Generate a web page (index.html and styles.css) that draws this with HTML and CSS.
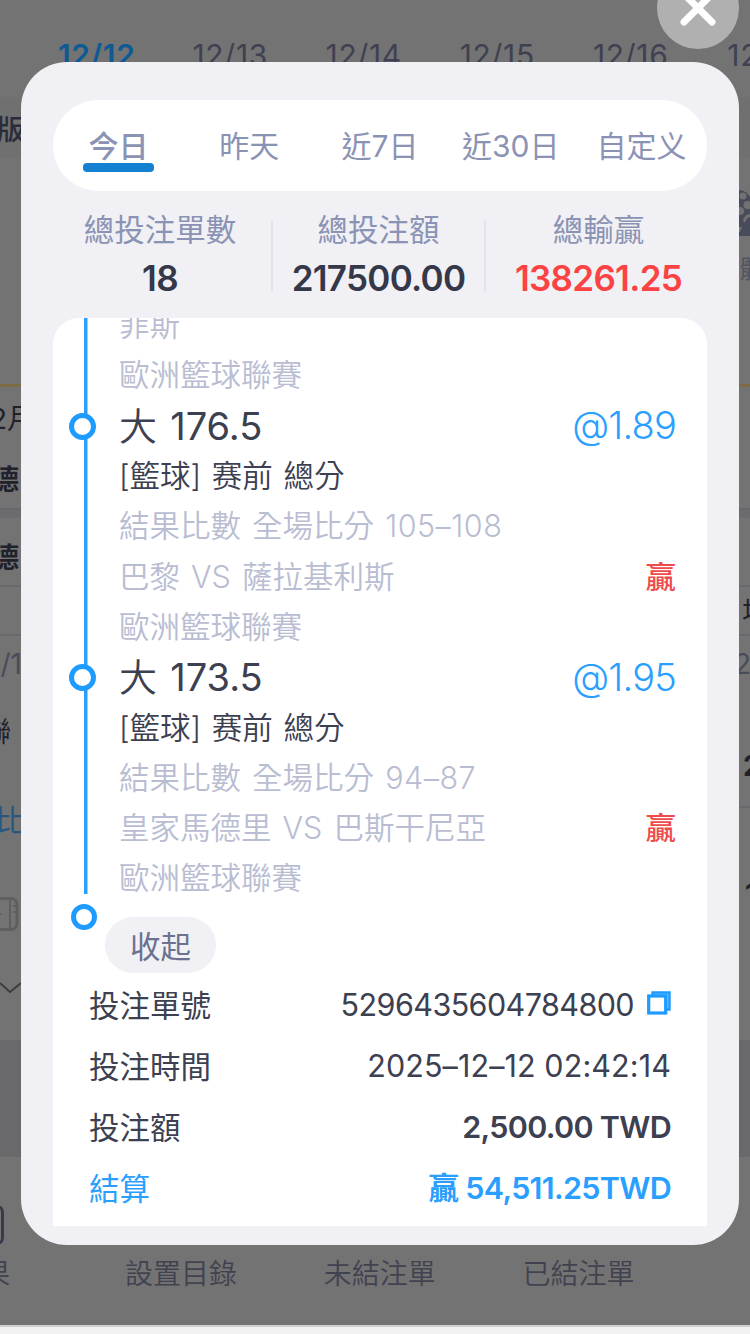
FILE: index.html
```
<!DOCTYPE html>
<html lang="zh-Hant">
<head>
<meta charset="utf-8">
<title>注單</title>
<link rel="stylesheet" href="styles.css">
</head>
<body>
<div class="page">
  <div class="backdrop">
    <div class="dates">
      <span class="date active">12/12</span><span class="date">12/13</span><span class="date">12/14</span><span class="date">12/15</span><span class="date">12/16</span><span class="date">12/17</span>
    </div>
    <div class="behind">
      <div class="rail left">
        <div class="cell h61 band"><b class="league">版</b></div>
        <div class="cell h226"></div>
        <div class="cell h63 month"><span>2月</span></div>
        <div class="cell h61"><b>德</b></div>
        <div class="gap"></div>
        <div class="cell h69 lined"><b>德</b></div>
        <div class="cell h49 lined"></div>
        <div class="cell h56 dim"><span>/1</span></div>
        <div class="cell h76"><em>聯</em></div>
        <div class="cell h100 link"><span>比</span></div>
        <div class="cell h94"><svg class="video" width="22" height="34" viewBox="0 0 22 34"><rect x="-20" y="1.5" width="38" height="31" rx="6" fill="none" stroke="#5f5f60" stroke-width="3"/><path d="M11 2v30M14 9h4M14 15h4" fill="none" stroke="#5f5f60" stroke-width="2"/><path d="M-3 13l6 4-6 4z" fill="#5f5f60"/></svg></div>
        <div class="cell h78 more"><svg class="chevron" width="21" height="12" viewBox="0 0 21 12"><path d="M0 1l10 9 11-9" fill="none" stroke="#3c3c3e" stroke-width="1.8"/></svg></div>
        <div class="shade"></div>
      </div>
      <div class="rail right">
        <div class="cell h61 band"></div>
        <div class="cell h226 team">
          <svg width="11" height="46" viewBox="0 0 11 46"><path d="M0 0Q8 1 11 7V46H0z" fill="#484b5a"/><g fill="#727272"><circle cx="4" cy="6" r="3.500"/><circle cx="8.500" cy="15" r="4"/><circle cx="1" cy="21" r="4"/><path d="M4 30Q6 24 11 24V27Q7 28 6 33z"/><path d="M0 37h3l-2 5H0z"/></g></svg>
          <span>體育</span>
        </div>
        <div class="cell h63 month"></div>
        <div class="cell h61"></div>
        <div class="gap"></div>
        <div class="cell h69 lined"></div>
        <div class="cell h49 lined"><span class="field">場</span></div>
        <div class="cell h56 dim"><span>24</span></div>
        <div class="cell h116 lined"><b class="total">2</b></div>
        <div class="cell h232"><b class="one">1</b></div>
        <div class="shade"></div>
      </div>
    </div>
    <div class="bottom-nav">
      <span class="nav">賽果</span><span class="nav">設置目錄</span><span class="nav">未結注單</span><span class="nav">已結注單</span>
      <i class="nav-icon"></i>
    </div>
  </div>
  <div class="base"></div>

  <button class="close" aria-label="關閉"><svg width="82" height="82" viewBox="0 0 82 82"><path d="M27 27L55 55M55 27L27 55" fill="none" stroke="#fff" stroke-width="7" stroke-linecap="round"/></svg></button>

  <section class="modal">
    <nav class="tabs">
      <span class="tab on">今日</span><span class="tab">昨天</span><span class="tab">近7日</span><span class="tab">近30日</span><span class="tab">自定义</span>
    </nav>
    <div class="stats">
      <div class="stat"><span>總投注單數</span><b>18</b></div>
      <div class="stat"><span>總投注額</span><b>217500.00</b></div>
      <div class="stat"><span>總輸贏</span><b class="red">138261.25</b></div>
    </div>
    <div class="sheet">
      <div class="legs">
        <div class="line"><span>菲斯</span></div>
        <div class="line"><span>歐洲籃球聯賽</span></div>
        <div class="line pick"><span>大 <span class="total-line">176.5</span></span><span class="odds">@1.89</span></div>
        <div class="line market"><span>[籃球] 赛前 總分</span></div>
        <div class="line"><span>結果比數 全場比分 <span class="score">105–108</span></span></div>
        <div class="line"><span>巴黎 VS 薩拉基利斯</span><b class="win">贏</b></div>
        <div class="line"><span>歐洲籃球聯賽</span></div>
        <div class="line pick"><span>大 <span class="total-line">173.5</span></span><span class="odds">@1.95</span></div>
        <div class="line market"><span>[籃球] 赛前 總分</span></div>
        <div class="line"><span>結果比數 全場比分 <span class="score">94–87</span></span></div>
        <div class="line"><span>皇家馬德里 VS 巴斯干尼亞</span><b class="win">贏</b></div>
        <div class="line"><span>歐洲籃球聯賽</span></div>
      </div>
      <div class="fold"><i class="dot"></i><button class="collapse">收起</button></div>
      <div class="info">
        <div class="row"><span class="key">投注單號</span><span class="val"><span class="id">5296435604784800</span><svg class="copy" width="24" height="24" viewBox="0 0 24 24"><path d="M5.500 1.500h17v17h-4V5h-13z" fill="#7dc5ff" stroke="#1d9bff" stroke-width="2.400"/><rect x="1.700" y="5" width="17" height="17" fill="#fff" stroke="#1d9bff" stroke-width="3.200"/></svg></span></div>
        <div class="row"><span class="key">投注時間</span><span class="val time">2025–12–12 02:42:14</span></div>
        <div class="row"><span class="key">投注額</span><span class="val strong">2,500.00 TWD</span></div>
        <div class="row blue"><span class="key">結算</span><span class="strong payout">贏 54,511.25TWD</span></div>
      </div>
    </div>
  </section>
</div>
</body>
</html>
```
FILE: styles.css
```
*, *::before, *::after { box-sizing: border-box; }
body {
  margin: 0;
  font-family: Inter, "Noto Sans CJK TC", sans-serif;
  font-size: 30.5px;
  font-weight: 400;
  color: #3c4050;
}
.page { position: relative; width: 750px; height: 1334px; overflow: hidden; background: #f2f2f2; }
button { border: 0; padding: 0; font: inherit; color: inherit; }
i, em { font-style: normal; }

/* Dimmed page behind the dialog */
.backdrop { height: 1325px; background: #737373; color: #3f4152; display: flex; flex-direction: column; overflow: hidden; }
.dates { height: 97px; flex: none; display: flex; padding: 36px 0 0 30px; }
.date { flex: none; width: 133.500px; text-align: center; font-size: 30px; letter-spacing: 0.7px; line-height: 39px; white-space: nowrap; }
.date.active { color: #0e5a94; font-weight: 600; }
.behind { height: 1060px; flex: none; display: flex; justify-content: space-between; }
.rail { display: flex; flex-direction: column; overflow: hidden; }
.left { width: 21px; }
.right { width: 11px; }
.cell { flex: none; display: flex; align-items: center; justify-content: flex-end; font-size: 28px; white-space: nowrap; color: #20212a; }
.right .cell { justify-content: flex-start; }
.band { background: #707070; }
.h61 { height: 61px; }
.h226 { height: 226px; }
.h63 { height: 63px; }
.h69 { height: 69px; padding-top: 9px; }
.h49 { height: 49px; }
.h56 { height: 56px; }
.h76 { height: 76px; }
.h100 { height: 100px; }
.h94 { height: 94px; }
.h78 { height: 78px; }
.h116 { height: 116px; }
.h232 { height: 232px; }
.cell .league { font-weight: 500; color: #2b2c3b; }
.month { border-top: 3px solid #7d6b45; }
.month span { margin-right: -14px; }
.cell b { font-weight: 700; }
.left .h61 b, .left .h69 b { margin-right: 2px; }
.left .h61 .league { margin-right: -4px; }
.gap { flex: none; height: 10px; background: #6c6c6f; border-top: 2px solid #67686c; }
.lined { border-bottom: 2px solid #68696d; }
.cell.dim { color: #4a4b5a; }
.left .dim span { margin-right: -1px; }
.cell em { margin-right: 10px; }
.cell.link { color: #28587e; font-size: 30px; }
.link span { margin-right: -4px; }
.video, .chevron { flex: none; }
.video { margin-bottom: 3px; }
.more { padding-bottom: 26px; }
.shade { flex: 1; background: #69696c; }
.team { flex-direction: column; padding-top: 32px; font-size: 25px; }
.right .team { align-items: flex-start; color: #505260; }
.team span { line-height: 66px; margin-left: 1px; }
.team svg { flex: none; }
.field { margin-left: 3px; }
.right .dim span { margin-left: -5px; }
.total { margin: 34px 0 0 4px; }
.one { margin: -60px 0 0 6px; }
.bottom-nav { position: relative; flex: 1; display: flex; margin-left: -117px; padding-top: 97px; }
.nav { flex: none; width: 198.700px; text-align: center; font-size: 28px; line-height: 40px; color: #41424f; font-weight: 350; }
.nav-icon { position: absolute; left: 89px; top: 48px; width: 32px; height: 40px; border: 3px solid #383a4a; border-radius: 7px; }
.base { height: 9px; border-top: 2px solid #d0d0d0; background: #f2f2f2; }

.close { position: absolute; left: 657px; top: -33px; width: 82px; height: 82px; border-radius: 50%; background: #b0b0b0; }
.close svg { display: block; }

/* Dialog */
.modal {
  position: absolute; left: 21px; top: 62px; width: 718px; height: 1183px;
  padding: 38px 32px 19px; border-radius: 46px; background: #f0f0f5;
  display: flex; flex-direction: column;
}
.tabs { height: 91px; flex: none; display: flex; border-radius: 46px; background: #fff; color: #8b93b4; font-size: 30px; }
.tab { flex: 1; text-align: center; line-height: 92px; white-space: nowrap; }
.on { display: flex; flex-direction: column; align-items: center; font-weight: 500; }
.on::after { content: ""; width: 71px; height: 9px; margin-top: -29px; flex: none; border-radius: 4px; background: #1380d2; }
.stats { height: 127px; flex: none; margin: 0 -4px; display: grid; grid-template-columns: 224px 213px 225px; padding-top: 29px; }
.stat { height: 72px; display: flex; flex-direction: column; align-items: center; color: #8b93b4; border-right: 2px solid #e2e4ed; }
.stat:last-child { border-right: 0; }
.stat span { height: 34px; flex: none; line-height: 20px; }
.stat b { font-size: 35px; line-height: 48px; font-weight: 600; letter-spacing: -0.7px; color: #343848; }
.stat b.red { color: #fb4343; }
.sheet { flex: 1; overflow: hidden; border-radius: 26px 26px 0 0; background: #fff; }
.legs {
  margin-top: -18px; padding: 0 31px 0 66px; height: 594px;
  background: linear-gradient(#2a9fff, #2a9fff) 31px 0 / 3.500px 594px no-repeat;
}
.line { height: 50.300px; display: flex; align-items: center; justify-content: space-between; white-space: nowrap; word-spacing: 2.5px; color: #b9bdd2; position: relative; font-weight: 350; }
.line > span { padding-bottom: 4px; }
.score { letter-spacing: 0.5px; }
.pick { font-size: 38px; color: #3c4050; }
.line.pick > span { padding-bottom: 5px; }
.total-line { font-weight: 400; }
.pick::before, .dot { content: ""; width: 27px; height: 27px; border: 5px solid #1d9bff; border-radius: 50%; background: #fff; }
.pick::before { position: absolute; left: -50px; top: 12px; }
.line.pick > .odds { color: #2a9fff; padding-bottom: 1px; letter-spacing: -0.8px; }
.market { color: #3c4050; word-spacing: 2px; }
.win { color: #ee4b4b; font-weight: 500; padding-bottom: 4px; }
.fold { display: flex; align-items: flex-start; gap: 8px; padding: 10px 0 0 18px; height: 80px; }
.dot { width: 26px; height: 26px; }
.collapse { width: 111px; height: 56px; margin-top: 13px; padding-bottom: 1px; border-radius: 28px; background: #f0f0f5; color: #6b718f; }
.info { padding: 0 36px; }
.row { height: 61px; display: flex; align-items: center; justify-content: space-between; white-space: nowrap; }
.key { padding-bottom: 2px; }
.val { display: flex; align-items: center; gap: 13px; }
.id { letter-spacing: -0.58px; }
.time { letter-spacing: 0.1px; }
.copy { margin-bottom: 4px; }
.strong { font-weight: 600; letter-spacing: -0.7px; }
.payout { padding-bottom: 4px; }
.blue { color: #2a9fff; }
```
